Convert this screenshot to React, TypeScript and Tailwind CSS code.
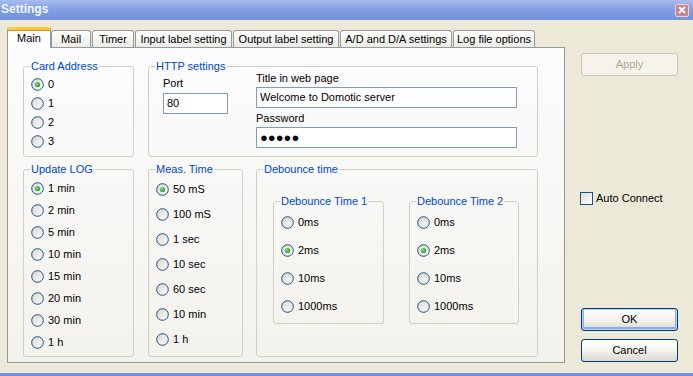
import { ReactNode } from 'react';
import { clsx, type ClassValue } from 'clsx';
import { twMerge } from 'tailwind-merge';

const cn = (...inputs: ClassValue[]) => twMerge(clsx(inputs));

const RadioIcon = ({ checked }: { checked?: boolean }) => (
  <svg width="13" height="13" viewBox="0 0 13 13" className="shrink-0">
    <defs>
      <linearGradient id="radioFill" x1="0" y1="0" x2="1" y2="1">
        <stop offset="0" stopColor="#D6D5CE" />
        <stop offset="1" stopColor="#FFFFFF" />
      </linearGradient>
      <radialGradient id="radioDot" cx="0.4" cy="0.4" r="0.6">
        <stop offset="0" stopColor="#8EE88E" />
        <stop offset="1" stopColor="#1E9A1E" />
      </radialGradient>
    </defs>
    <circle cx="6.5" cy="6.5" r="5.8" fill="url(#radioFill)" stroke="#1C5180" strokeWidth="1" />
    {checked && <circle cx="6.5" cy="6.5" r="2.6" fill="url(#radioDot)" />}
  </svg>
);

const Radio = ({ label, checked, h }: { label: string; checked?: boolean; h: string }) => (
  <div className={cn('flex items-center gap-[4px]', h)}>
    <RadioIcon checked={checked} />
    <span>{label}</span>
  </div>
);

const Group = ({ title, className, children }: { title: string; className?: string; children?: ReactNode }) => (
  <fieldset className={cn('border border-[#D0D0BF] rounded-[3px] p-0 m-0 min-w-0', className)}>
    <legend className="ml-[6px] px-[1px] text-[#0046D5] leading-[13px]">{title}</legend>
    {children}
  </fieldset>
);

const Tab = ({ label, w, active }: { label: string; w: string; active?: boolean }) =>
  active ? (
    <div
      className={cn(
        'relative z-10 -mb-px h-[21px] flex items-center justify-center bg-white border-x border-[#919B9C] rounded-t-[3px] border-t-[3px] border-t-[#FFC83C] shadow-[inset_0_1px_0_#E68B2C]',
        w
      )}
    >
      <span className="-mt-[2px]">{label}</span>
    </div>
  ) : (
    <div
      className={cn(
        'h-[17px] flex items-center justify-center border-x border-t border-[#919B9C] rounded-t-[3px] bg-linear-to-b from-white to-[#ECEBE5]',
        w
      )}
    >
      <span className="pt-[1px]">{label}</span>
    </div>
  );

const Button = ({ label, disabled, isDefault, className }: { label: string; disabled?: boolean; isDefault?: boolean; className?: string }) => (
  <div
    className={cn(
      'w-[97px] h-[23px] flex items-center justify-center rounded-[3px] border',
      disabled
        ? 'border-[#C9C7BA] bg-[#F5F4EA] text-[#ACA899]'
        : 'border-[#003C74] bg-linear-to-b from-white via-[#F4F3EE] to-[#DCD8CC] text-black',
      isDefault && 'shadow-[inset_0_0_0_1px_#BCD4F6,inset_0_-1px_0_2px_#89ADE4]',
      className
    )}
  >
    {label}
  </div>
);

const TextBox = ({ value, className, password }: { value: string; className?: string; password?: boolean }) => (
  <div className={cn('border border-[#7F9DB9] bg-white flex items-center pl-[3px]', className)}>
    {password ? (
      <span className="text-[13px] leading-none">●●●●●</span>
    ) : (
      <span>{value}</span>
    )}
  </div>
);

export default function App() {
  return (
    <div className="w-[693px] h-[376px] overflow-hidden bg-[#ECE9D8] flex flex-col font-['Liberation_Sans',Arial,sans-serif] text-[11px] leading-[13px] text-black">
      {/* title bar */}
      <div className="h-[20px] shrink-0 flex items-center bg-linear-to-b from-[#A9BDF0] via-[#819DE3] to-[#7391DE]">
        <span className="pl-[1px] font-bold text-[12px] text-[#F2F5FD] -mt-[1px]">Settings</span>
        <div className="ml-auto mr-[4px] w-[14px] h-[13px] rounded-[2px] bg-[#C7828F] border border-[#E6D3DC] flex items-center justify-center">
          <svg width="8" height="8" viewBox="0 0 8 8">
            <path d="M1 1 L7 7 M7 1 L1 7" stroke="#FFFFFF" strokeWidth="1.8" />
          </svg>
        </div>
      </div>

      <div className="flex flex-1">
        {/* tabs + page */}
        <div className="ml-[7px] mt-[7px] flex flex-col">
          <div className="flex items-end h-[20px]">
            <Tab label="Main" w="w-[44px]" active />
            <Tab label="Mail" w="w-[40px]" />
            <div className="w-[1px]" />
            <Tab label="Timer" w="w-[42px]" />
            <div className="w-[1px]" />
            <Tab label="Input label setting" w="w-[97px]" />
            <div className="w-[1px]" />
            <Tab label="Output label setting" w="w-[106px]" />
            <div className="w-[1px]" />
            <Tab label="A/D and D/A settings" w="w-[112px]" />
            <div className="w-[1px]" />
            <Tab label="Log file options" w="w-[82px]" />
          </div>

          <div className="w-[558px] h-[316px] border border-[#919B9C] bg-linear-to-b from-[#FCFCFE] to-[#F3F2EC] pt-[12px] pl-[15px] flex flex-col gap-[6px]">
            {/* row 1 */}
            <div className="flex gap-[14px]">
              <Group title="Card Address" className="w-[111px] h-[97px]">
                <div className="pl-[7px] pt-[2px]">
                  <Radio label="0" checked h="h-[19px]" />
                  <Radio label="1" h="h-[19px]" />
                  <Radio label="2" h="h-[19px]" />
                  <Radio label="3" h="h-[19px]" />
                </div>
              </Group>
              <Group title="HTTP settings" className="w-[390px] h-[97px]">
                <div className="flex pl-[14px]">
                  <div className="w-[65px] flex flex-col pt-[4px]">
                    <span>Port</span>
                    <TextBox value="80" className="mt-[3px] h-[21px]" />
                  </div>
                  <div className="ml-[28px] flex flex-col -mt-[1px]">
                    <span>Title in web page</span>
                    <TextBox value="Welcome to Domotic server" className="mt-[2px] w-[261px] h-[21px]" />
                    <span className="mt-[4px]">Password</span>
                    <TextBox value="" password className="mt-[2px] w-[261px] h-[21px]" />
                  </div>
                </div>
              </Group>
            </div>

            {/* row 2 */}
            <div className="flex">
              <Group title="Update LOG" className="w-[111px] h-[194px]">
                <div className="pl-[7px] pt-[1px]">
                  <Radio label="1 min" checked h="h-[22px]" />
                  <Radio label="2 min" h="h-[22px]" />
                  <Radio label="5 min" h="h-[22px]" />
                  <Radio label="10 min" h="h-[22px]" />
                  <Radio label="15 min" h="h-[22px]" />
                  <Radio label="20 min" h="h-[22px]" />
                  <Radio label="30 min" h="h-[22px]" />
                  <Radio label="1 h" h="h-[22px]" />
                </div>
              </Group>
              <Group title="Meas. Time" className="ml-[14px] w-[95px] h-[194px]">
                <div className="pl-[7px] pt-[1px]">
                  <Radio label="50 mS" checked h="h-[25px]" />
                  <Radio label="100 mS" h="h-[25px]" />
                  <Radio label="1 sec" h="h-[25px]" />
                  <Radio label="10 sec" h="h-[25px]" />
                  <Radio label="60 sec" h="h-[25px]" />
                  <Radio label="10 min" h="h-[25px]" />
                  <Radio label="1 h" h="h-[25px]" />
                </div>
              </Group>
              <Group title="Debounce time" className="ml-[13px] w-[282px] h-[194px]">
                <div className="flex pl-[16px] pt-[19px] gap-[25px]">
                  <Group title="Debounce Time 1" className="w-[111px] h-[129px]">
                    <div className="pl-[7px]">
                      <Radio label="0ms" h="h-[28px]" />
                      <Radio label="2ms" checked h="h-[28px]" />
                      <Radio label="10ms" h="h-[28px]" />
                      <Radio label="1000ms" h="h-[28px]" />
                    </div>
                  </Group>
                  <Group title="Debounce Time 2" className="w-[110px] h-[129px]">
                    <div className="pl-[7px]">
                      <Radio label="0ms" h="h-[28px]" />
                      <Radio label="2ms" checked h="h-[28px]" />
                      <Radio label="10ms" h="h-[28px]" />
                      <Radio label="1000ms" h="h-[28px]" />
                    </div>
                  </Group>
                </div>
              </Group>
            </div>
          </div>
        </div>

        {/* right column */}
        <div className="ml-[16px] flex flex-col">
          <Button label="Apply" disabled className="mt-[33px]" />
          <div className="mt-[115px] -ml-[1px] flex items-center gap-[3px] h-[14px]">
            <div className="w-[13px] h-[13px] border border-[#1C5180] bg-linear-to-br from-[#DCDCD7] to-white" />
            <span>Auto Connect</span>
          </div>
          <Button label="OK" isDefault className="mt-[103px]" />
          <Button label="Cancel" className="mt-[8px]" />
        </div>
      </div>

      <div className="h-[3px] shrink-0 bg-[#7A8EE2]" />
    </div>
  );
}
